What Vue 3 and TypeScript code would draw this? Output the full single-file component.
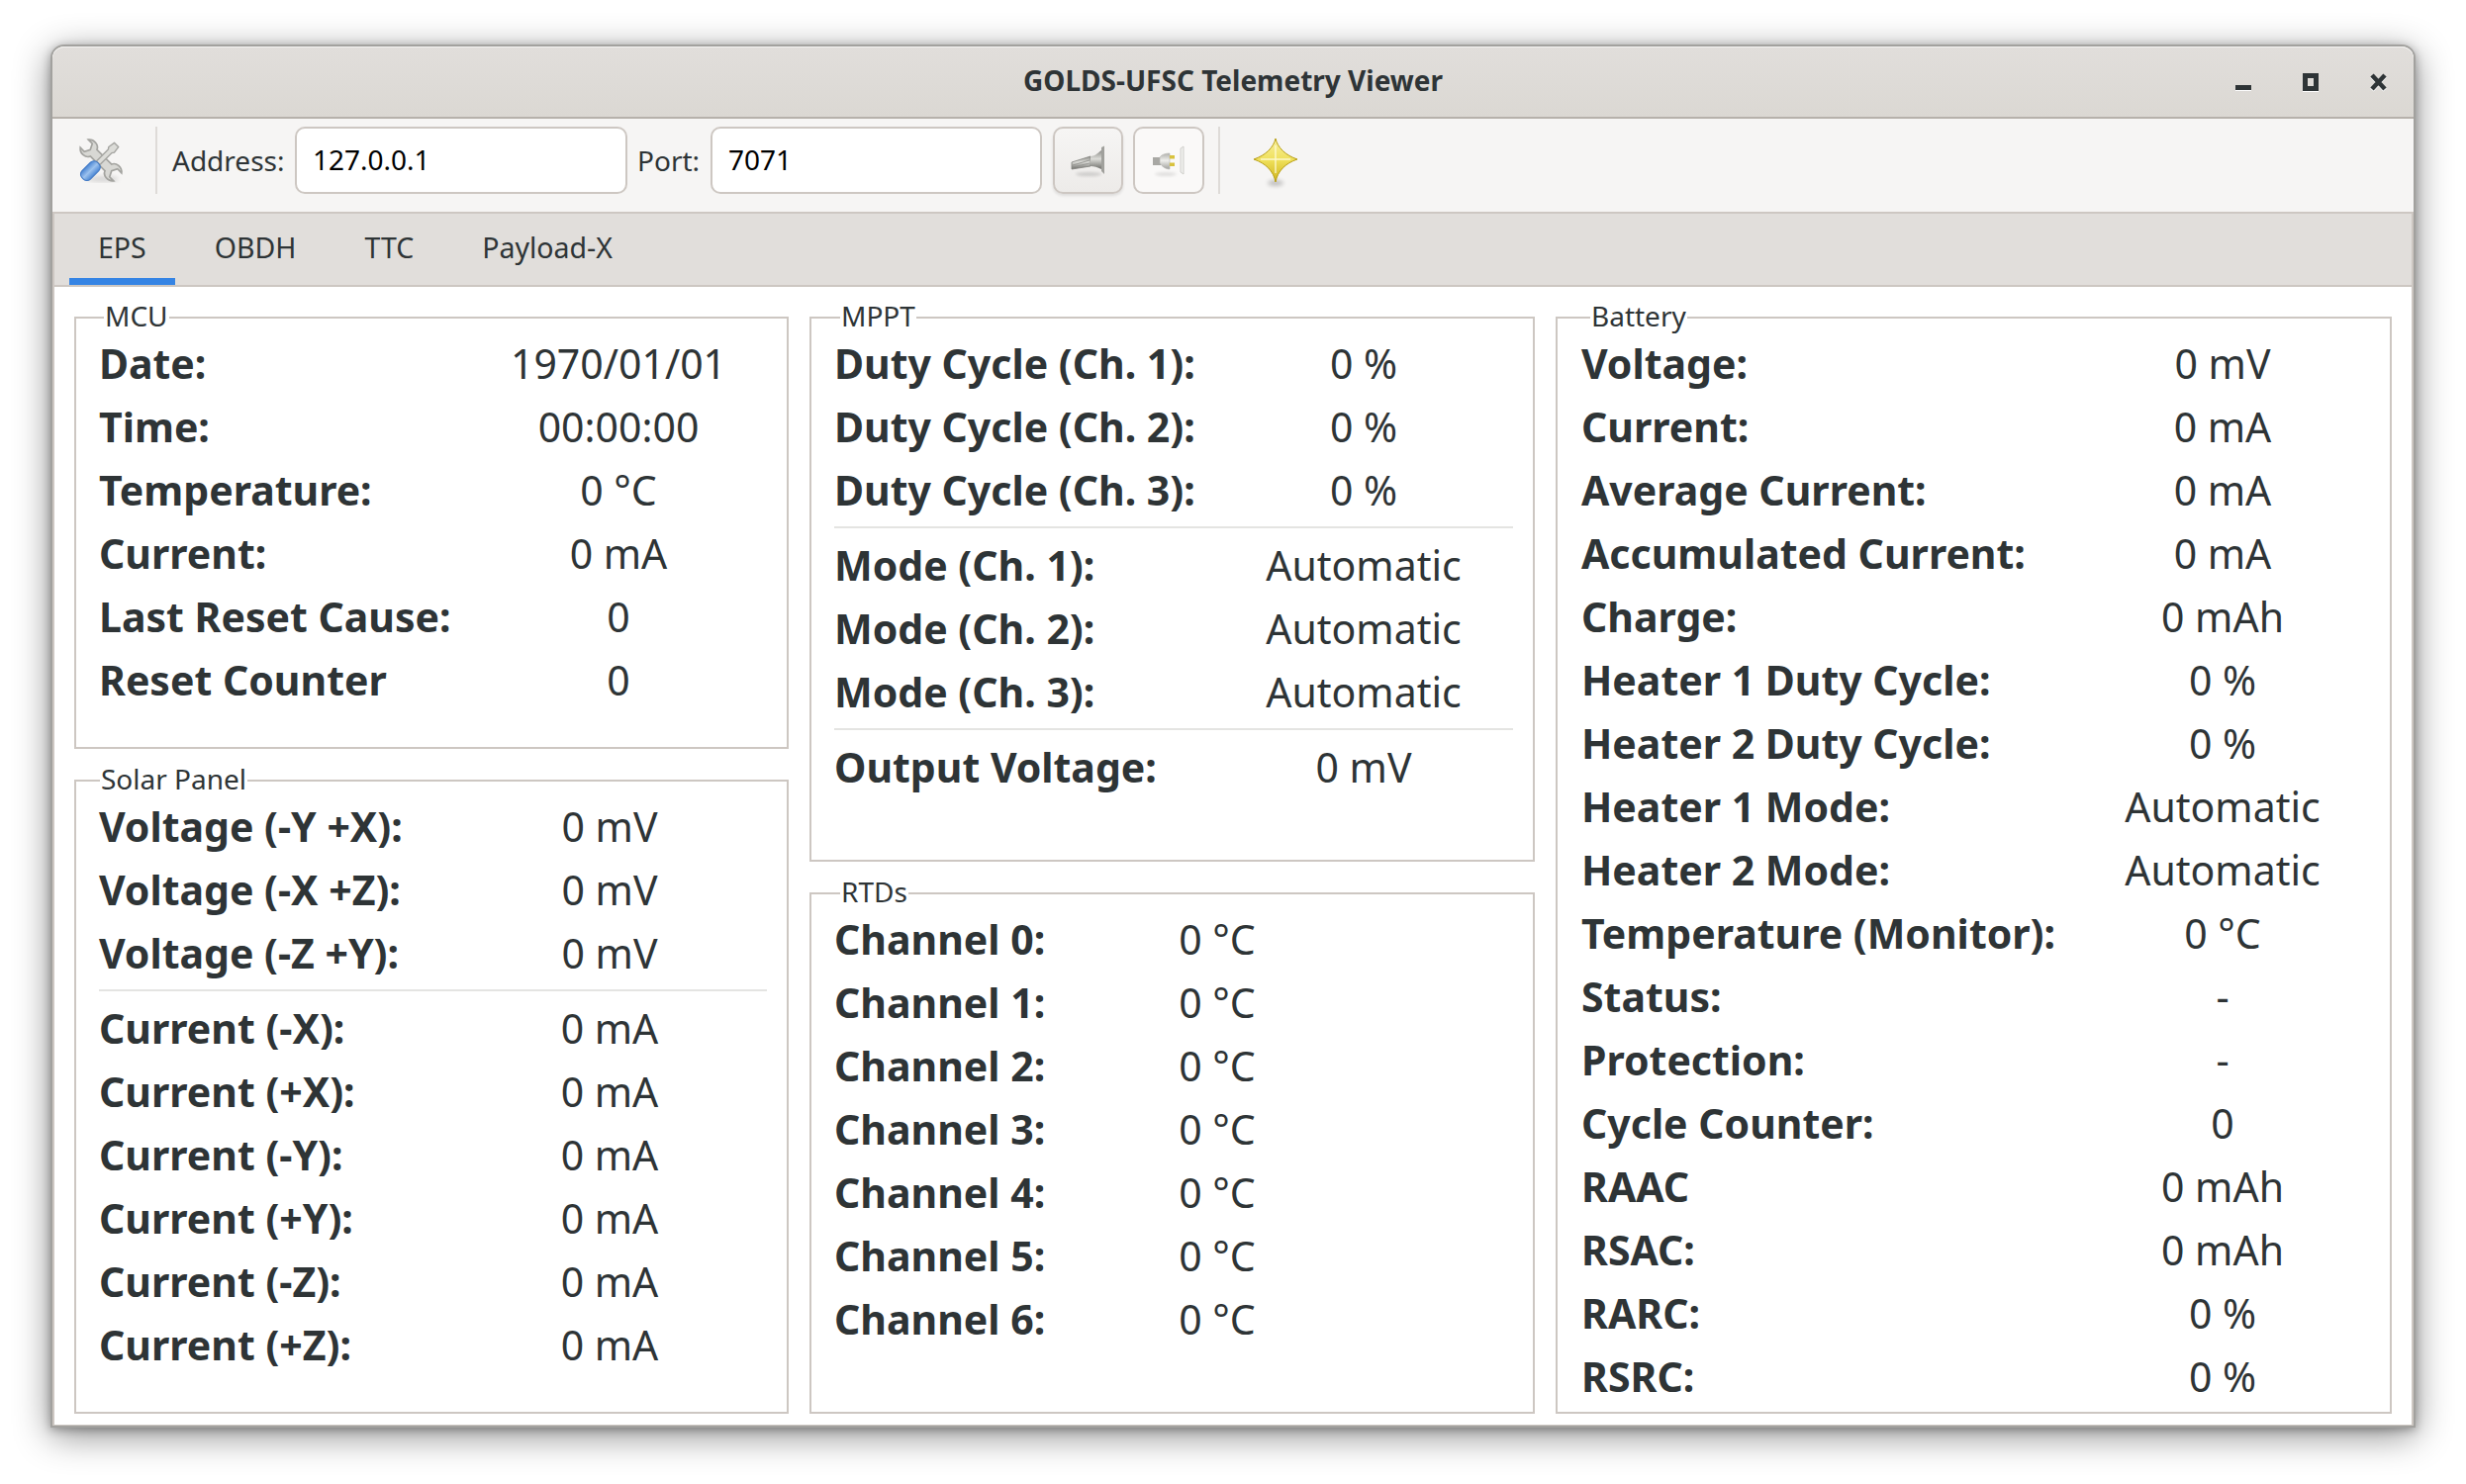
<script setup lang="ts">
type Row = [string, string] | null;

interface Frame {
  title: string;
  cls: string;
  rows: Row[];
}

const tabs = ["EPS", "OBDH", "TTC", "Payload-X"];

const mcu: Frame = {
  title: "MCU",
  cls: "mcu",
  rows: [
    ["Date:", "1970/01/01"],
    ["Time:", "00:00:00"],
    ["Temperature:", "0 °C"],
    ["Current:", "0 mA"],
    ["Last Reset Cause:", "0"],
    ["Reset Counter", "0"],
  ],
};

const solar: Frame = {
  title: "Solar Panel",
  cls: "solar",
  rows: [
    ["Voltage (-Y +X):", "0 mV"],
    ["Voltage (-X +Z):", "0 mV"],
    ["Voltage (-Z +Y):", "0 mV"],
    null,
    ["Current (-X):", "0 mA"],
    ["Current (+X):", "0 mA"],
    ["Current (-Y):", "0 mA"],
    ["Current (+Y):", "0 mA"],
    ["Current (-Z):", "0 mA"],
    ["Current (+Z):", "0 mA"],
  ],
};

const mppt: Frame = {
  title: "MPPT",
  cls: "mppt",
  rows: [
    ["Duty Cycle (Ch. 1):", "0 %"],
    ["Duty Cycle (Ch. 2):", "0 %"],
    ["Duty Cycle (Ch. 3):", "0 %"],
    null,
    ["Mode (Ch. 1):", "Automatic"],
    ["Mode (Ch. 2):", "Automatic"],
    ["Mode (Ch. 3):", "Automatic"],
    null,
    ["Output Voltage:", "0 mV"],
  ],
};

const rtds: Frame = {
  title: "RTDs",
  cls: "rtds",
  rows: [0, 1, 2, 3, 4, 5, 6].map((n): Row => [`Channel ${n}:`, "0 °C"]),
};

const battery: Frame = {
  title: "Battery",
  cls: "battery",
  rows: [
    ["Voltage:", "0 mV"],
    ["Current:", "0 mA"],
    ["Average Current:", "0 mA"],
    ["Accumulated Current:", "0 mA"],
    ["Charge:", "0 mAh"],
    ["Heater 1 Duty Cycle:", "0 %"],
    ["Heater 2 Duty Cycle:", "0 %"],
    ["Heater 1 Mode:", "Automatic"],
    ["Heater 2 Mode:", "Automatic"],
    ["Temperature (Monitor):", "0 °C"],
    ["Status:", "-"],
    ["Protection:", "-"],
    ["Cycle Counter:", "0"],
    ["RAAC", "0 mAh"],
    ["RSAC:", "0 mAh"],
    ["RARC:", "0 %"],
    ["RSRC:", "0 %"],
  ],
};

const columns: Frame[][] = [[mcu, solar], [mppt, rtds], [battery]];
</script>

<template>
  <div class="page">
    <div class="window">
      <header class="titlebar">
        <span class="title">GOLDS-UFSC Telemetry Viewer</span>
        <div class="win-buttons">
          <svg width="16" height="18" viewBox="0 0 16 18">
            <rect x="0" y="17" width="16" height="1" fill="#fff" />
            <rect x="0" y="12" width="16" height="5" fill="#2e3436" />
          </svg>
          <svg width="16" height="19" viewBox="0 0 16 19">
            <rect x="0" y="18" width="16" height="1" fill="#fff" />
            <path d="M0 0h16v18H0zM5 5v8h6V5z" fill="#2e3436" fill-rule="evenodd" />
          </svg>
          <svg width="17" height="19" viewBox="0 0 17 19">
            <path d="M2 3 15 17M15 3 2 17" stroke="#fff" stroke-width="4.5" />
            <path d="M2 2 15 16M15 2 2 16" stroke="#2e3436" stroke-width="4.5" />
          </svg>
        </div>
      </header>

      <div class="toolbar">
        <svg class="tools-icon" width="46" height="46" viewBox="0 0 46 46">
          <defs>
            <linearGradient id="handle" x1="0" y1="0" x2="1" y2="0">
              <stop offset="0" stop-color="#4a86d4" />
              <stop offset="0.5" stop-color="#9cc2ee" />
              <stop offset="1" stop-color="#4a86d4" />
            </linearGradient>
            <filter id="soft" x="-50%" y="-100%" width="200%" height="300%">
              <feGaussianBlur stdDeviation="2" />
            </filter>
          </defs>
          <ellipse cx="25" cy="42" rx="16" ry="3" fill="#000" opacity="0.12" filter="url(#soft)" />
          <g transform="rotate(-45 23 23) translate(23 23) scale(0.95) translate(-23 -23)">
            <path
              d="M18 12V34C13 36 12 44 17 48V42L23 39 29 42V48C34 44 33 36 28 34V12C33 10 34 2 29-2V4L23 7 17 4V-2C12 2 13 10 18 12Z"
              fill="#d8d8d4"
              stroke="#a4a4a0"
              stroke-width="1.8"
            />
          </g>
          <g transform="rotate(45 23 23)">
            <path d="M20 1H26L27 8 25.5 10V27H20.5V10L19 8Z" fill="#dcdcd8" stroke="#a4a4a0" stroke-width="1.4" />
            <rect x="17" y="27" width="12" height="22" rx="5" fill="url(#handle)" stroke="#3f78c4" stroke-width="1" />
          </g>
        </svg>
        <span class="tool-sep first"></span>
        <span class="tool-label">Address:</span>
        <div class="entry first">127.0.0.1</div>
        <span class="tool-label port">Port:</span>
        <div class="entry">7071</div>
        <button class="tool-btn raised">
          <svg width="48" height="48" viewBox="0 0 48 48">
            <defs>
              <linearGradient id="metal" x1="0" y1="0" x2="0" y2="1">
                <stop offset="0" stop-color="#8a8a86" />
                <stop offset="0.45" stop-color="#dcdcd8" />
                <stop offset="1" stop-color="#6e6e6a" />
              </linearGradient>
              <filter id="soft2" x="-50%" y="-100%" width="200%" height="300%">
                <feGaussianBlur stdDeviation="1.6" />
              </filter>
            </defs>
            <ellipse cx="24" cy="38" rx="13" ry="2" fill="#000" opacity="0.14" filter="url(#soft2)" />
            <path d="M7 26 L26 20 V30 L7 33Z" fill="url(#metal)" stroke="#80807c" stroke-width="0.8" />
            <path d="M8 29 L25 24M8 31 L25 27" stroke="#8f8f8b" stroke-width="0.8" />
            <path d="M26 20 C30 20 33 17 37 14 V33 C33 31 30 30 26 30Z" fill="url(#metal)" />
            <path d="M37 11 L40 9.5 V38 L37 35Z" fill="#a0a09c" />
          </svg>
        </button>
        <button class="tool-btn flat">
          <svg width="48" height="48" viewBox="0 0 48 48">
            <defs>
              <linearGradient id="metal2" x1="0" y1="0" x2="0" y2="1">
                <stop offset="0" stop-color="#b0b0ac" />
                <stop offset="0.45" stop-color="#efefec" />
                <stop offset="1" stop-color="#a0a09c" />
              </linearGradient>
            </defs>
            <ellipse cx="21" cy="38" rx="11" ry="2" fill="#000" opacity="0.1" filter="url(#soft2)" />
            <rect x="8" y="21" width="8" height="8" fill="#a8a8a4" />
            <path d="M15 21 C17 18 21 17 25 17 V33 C21 33 17 30 15 27Z" fill="url(#metal2)" stroke="#b4b4b0" stroke-width="0.6" />
            <rect x="25" y="19" width="5" height="3.5" fill="#d8c23e" />
            <rect x="25" y="26.5" width="5" height="3.5" fill="#d8c23e" />
            <path d="M36 12 L39 10 V38 L36 36Z" fill="#f0f0ee" stroke="#c6c6c2" stroke-width="0.8" />
          </svg>
        </button>
        <span class="tool-sep last"></span>
        <svg class="star" width="46" height="54" viewBox="0 0 46 54">
          <defs>
            <linearGradient id="gold" x1="0" y1="0" x2="0" y2="1">
              <stop offset="0" stop-color="#f8f0a0" />
              <stop offset="0.5" stop-color="#efe05a" />
              <stop offset="1" stop-color="#cfb41c" />
            </linearGradient>
            <filter id="soft3" x="-50%" y="-100%" width="200%" height="300%">
              <feGaussianBlur stdDeviation="2" />
            </filter>
          </defs>
          <ellipse cx="23" cy="46" rx="8" ry="3" fill="#000" opacity="0.22" filter="url(#soft3)" />
          <path
            d="M23 1C25 10 33 18 45 22C33 26 25 34 23 45C21 34 13 26 1 22C13 18 21 10 23 1Z"
            fill="url(#gold)"
            stroke="#b89e12"
            stroke-width="1"
            stroke-linejoin="round"
          />
          <path d="M23 8V36M8 22H38" stroke="#fffde0" stroke-width="1.4" opacity="0.85" />
        </svg>
      </div>

      <div class="notebook">
        <nav class="tabbar">
          <div v-for="(tab, i) in tabs" :key="tab" class="tab" :class="{ active: i === 0 }">{{ tab }}</div>
        </nav>
        <main class="panel">
          <div v-for="(col, c) in columns" :key="c" class="column">
            <fieldset v-for="frame in col" :key="frame.title" class="frame" :class="frame.cls">
              <legend>{{ frame.title }}</legend>
              <div class="rows">
                <template v-for="(row, r) in frame.rows" :key="r">
                  <div v-if="row === null" class="sep"></div>
                  <template v-else>
                    <span class="label">{{ row[0] }}</span>
                    <span class="value">{{ row[1] }}</span>
                  </template>
                </template>
              </div>
            </fieldset>
          </div>
        </main>
      </div>
    </div>
  </div>
</template>

<style scoped>
.page {
  box-sizing: border-box;
  min-height: 1500px;
  padding: 45px 0 0 51px;
  font-family: "Noto Sans", "Open Sans", sans-serif;
  color: #2e3436;
}

.window {
  box-sizing: border-box;
  display: flex;
  flex-direction: column;
  width: 2390px;
  height: 1398px;
  border: 2px solid #a2a19e;
  border-radius: 14px 14px 0 0;
  background: #fff;
  box-shadow: 0 2px 10px rgba(0, 0, 0, 0.3), 0 8px 36px rgba(0, 0, 0, 0.45);
}

.titlebar {
  box-sizing: border-box;
  position: relative;
  display: flex;
  align-items: center;
  justify-content: center;
  height: 73px;
  padding-bottom: 3px;
  border-bottom: 2px solid #b6b1ab;
  border-radius: 12px 12px 0 0;
  background: linear-gradient(#e1dedb, #dbd8d3);
  box-shadow: inset 0 1px 0 #f4f3f1;
}

.title {
  font-size: 28px;
  font-weight: 700;
}

.win-buttons {
  position: absolute;
  top: 27px;
  right: 27px;
  display: flex;
  gap: 52px;
}

.win-buttons svg {
  display: block;
}

.toolbar {
  box-sizing: border-box;
  display: flex;
  align-items: center;
  height: 94px;
  padding: 0 0 10px 26px;
  background: #f6f5f4;
  font-size: 28px;
}

.tool-sep {
  width: 2px;
  height: 68px;
  background: #dedbd8;
}

.tool-sep.first {
  margin: 0 15px 0 32px;
}

.tool-sep.last {
  margin: 0 33px 0 14px;
}

.tool-label {
  width: 114px;
  margin-right: 10px;
  white-space: nowrap;
}

.tool-label.port {
  width: 64px;
  margin: 0 10px 0 10px;
}

.entry {
  box-sizing: border-box;
  width: 335px;
  height: 68px;
  padding-left: 16px;
  border: 2px solid #cdc7c2;
  border-radius: 10px;
  background: #fff;
  color: #000;
  line-height: 62px;
}

.entry.first {
  width: 336px;
}

.tool-btn {
  box-sizing: border-box;
  display: flex;
  align-items: center;
  justify-content: center;
  height: 68px;
  padding: 0;
  border: 2px solid #cdc7c2;
  border-radius: 10px;
}

.tool-btn.raised {
  width: 71px;
  margin-left: 11px;
  background: linear-gradient(#f6f5f4, #edebe9);
  box-shadow: 0 2px 3px rgba(0, 0, 0, 0.1);
}

.tool-btn.flat {
  width: 72px;
  margin-left: 10px;
  background: #faf9f8;
}

.star {
  margin-top: 8px;
}

.notebook {
  flex: 1;
  display: flex;
  flex-direction: column;
  min-height: 0;
  border: 2px solid #cdc7c2;
  border-bottom-width: 1px;
}

.tabbar {
  box-sizing: border-box;
  display: flex;
  gap: 11px;
  height: 74px;
  padding-left: 15px;
  border-bottom: 2px solid #cdc7c2;
  background: #e1dedb;
  font-size: 28.5px;
}

.tab {
  box-sizing: border-box;
  height: 72px;
  padding: 0 29px;
  line-height: 68px;
}

.tab.active {
  border-bottom: 7px solid #3584e4;
}

.panel {
  flex: 1;
  display: grid;
  grid-template-columns: 722px 733px 845px;
  gap: 21px;
  padding: 15px 0 13px 20px;
}

.column {
  display: flex;
  flex-direction: column;
  gap: 16px;
}

.frame {
  box-sizing: border-box;
  min-width: 0;
  margin: 0;
  padding: 0 20px 34px 23px;
  border: 2px solid #cdc7c2;
}

.frame legend {
  padding: 0 1px 4px;
  font-size: 28px;
  line-height: 28px;
}

.mcu legend {
  margin-left: 5px;
}

.solar legend {
  margin-left: 1px;
}

.mppt legend,
.rtds legend {
  margin-left: 6px;
}

.battery legend {
  margin-left: 9px;
}

.rows {
  display: grid;
  font-size: 41px;
  line-height: 61px;
}

.mcu .rows {
  grid-template-columns: 1fr 300px;
}

.solar .rows {
  grid-template-columns: 1fr 318px;
}

.mppt .rows {
  grid-template-columns: 1fr 302px;
}

.rtds .rows {
  grid-template-columns: 217px 340px;
}

.battery .rows {
  grid-template-columns: 1fr 298px;
}

.mppt {
  padding-bottom: 60px;
}

.rtds {
  flex: 1;
}

.battery {
  flex: 1;
  padding: 0 20px 0 24px;
}

.label,
.value {
  padding-bottom: 3px;
  white-space: nowrap;
}

.label {
  font-weight: 700;
}

.value {
  text-align: center;
}

.sep {
  grid-column: 1 / -1;
  height: 2px;
  margin: 3px 0 7px;
  background: #e4e4e2;
}
</style>
